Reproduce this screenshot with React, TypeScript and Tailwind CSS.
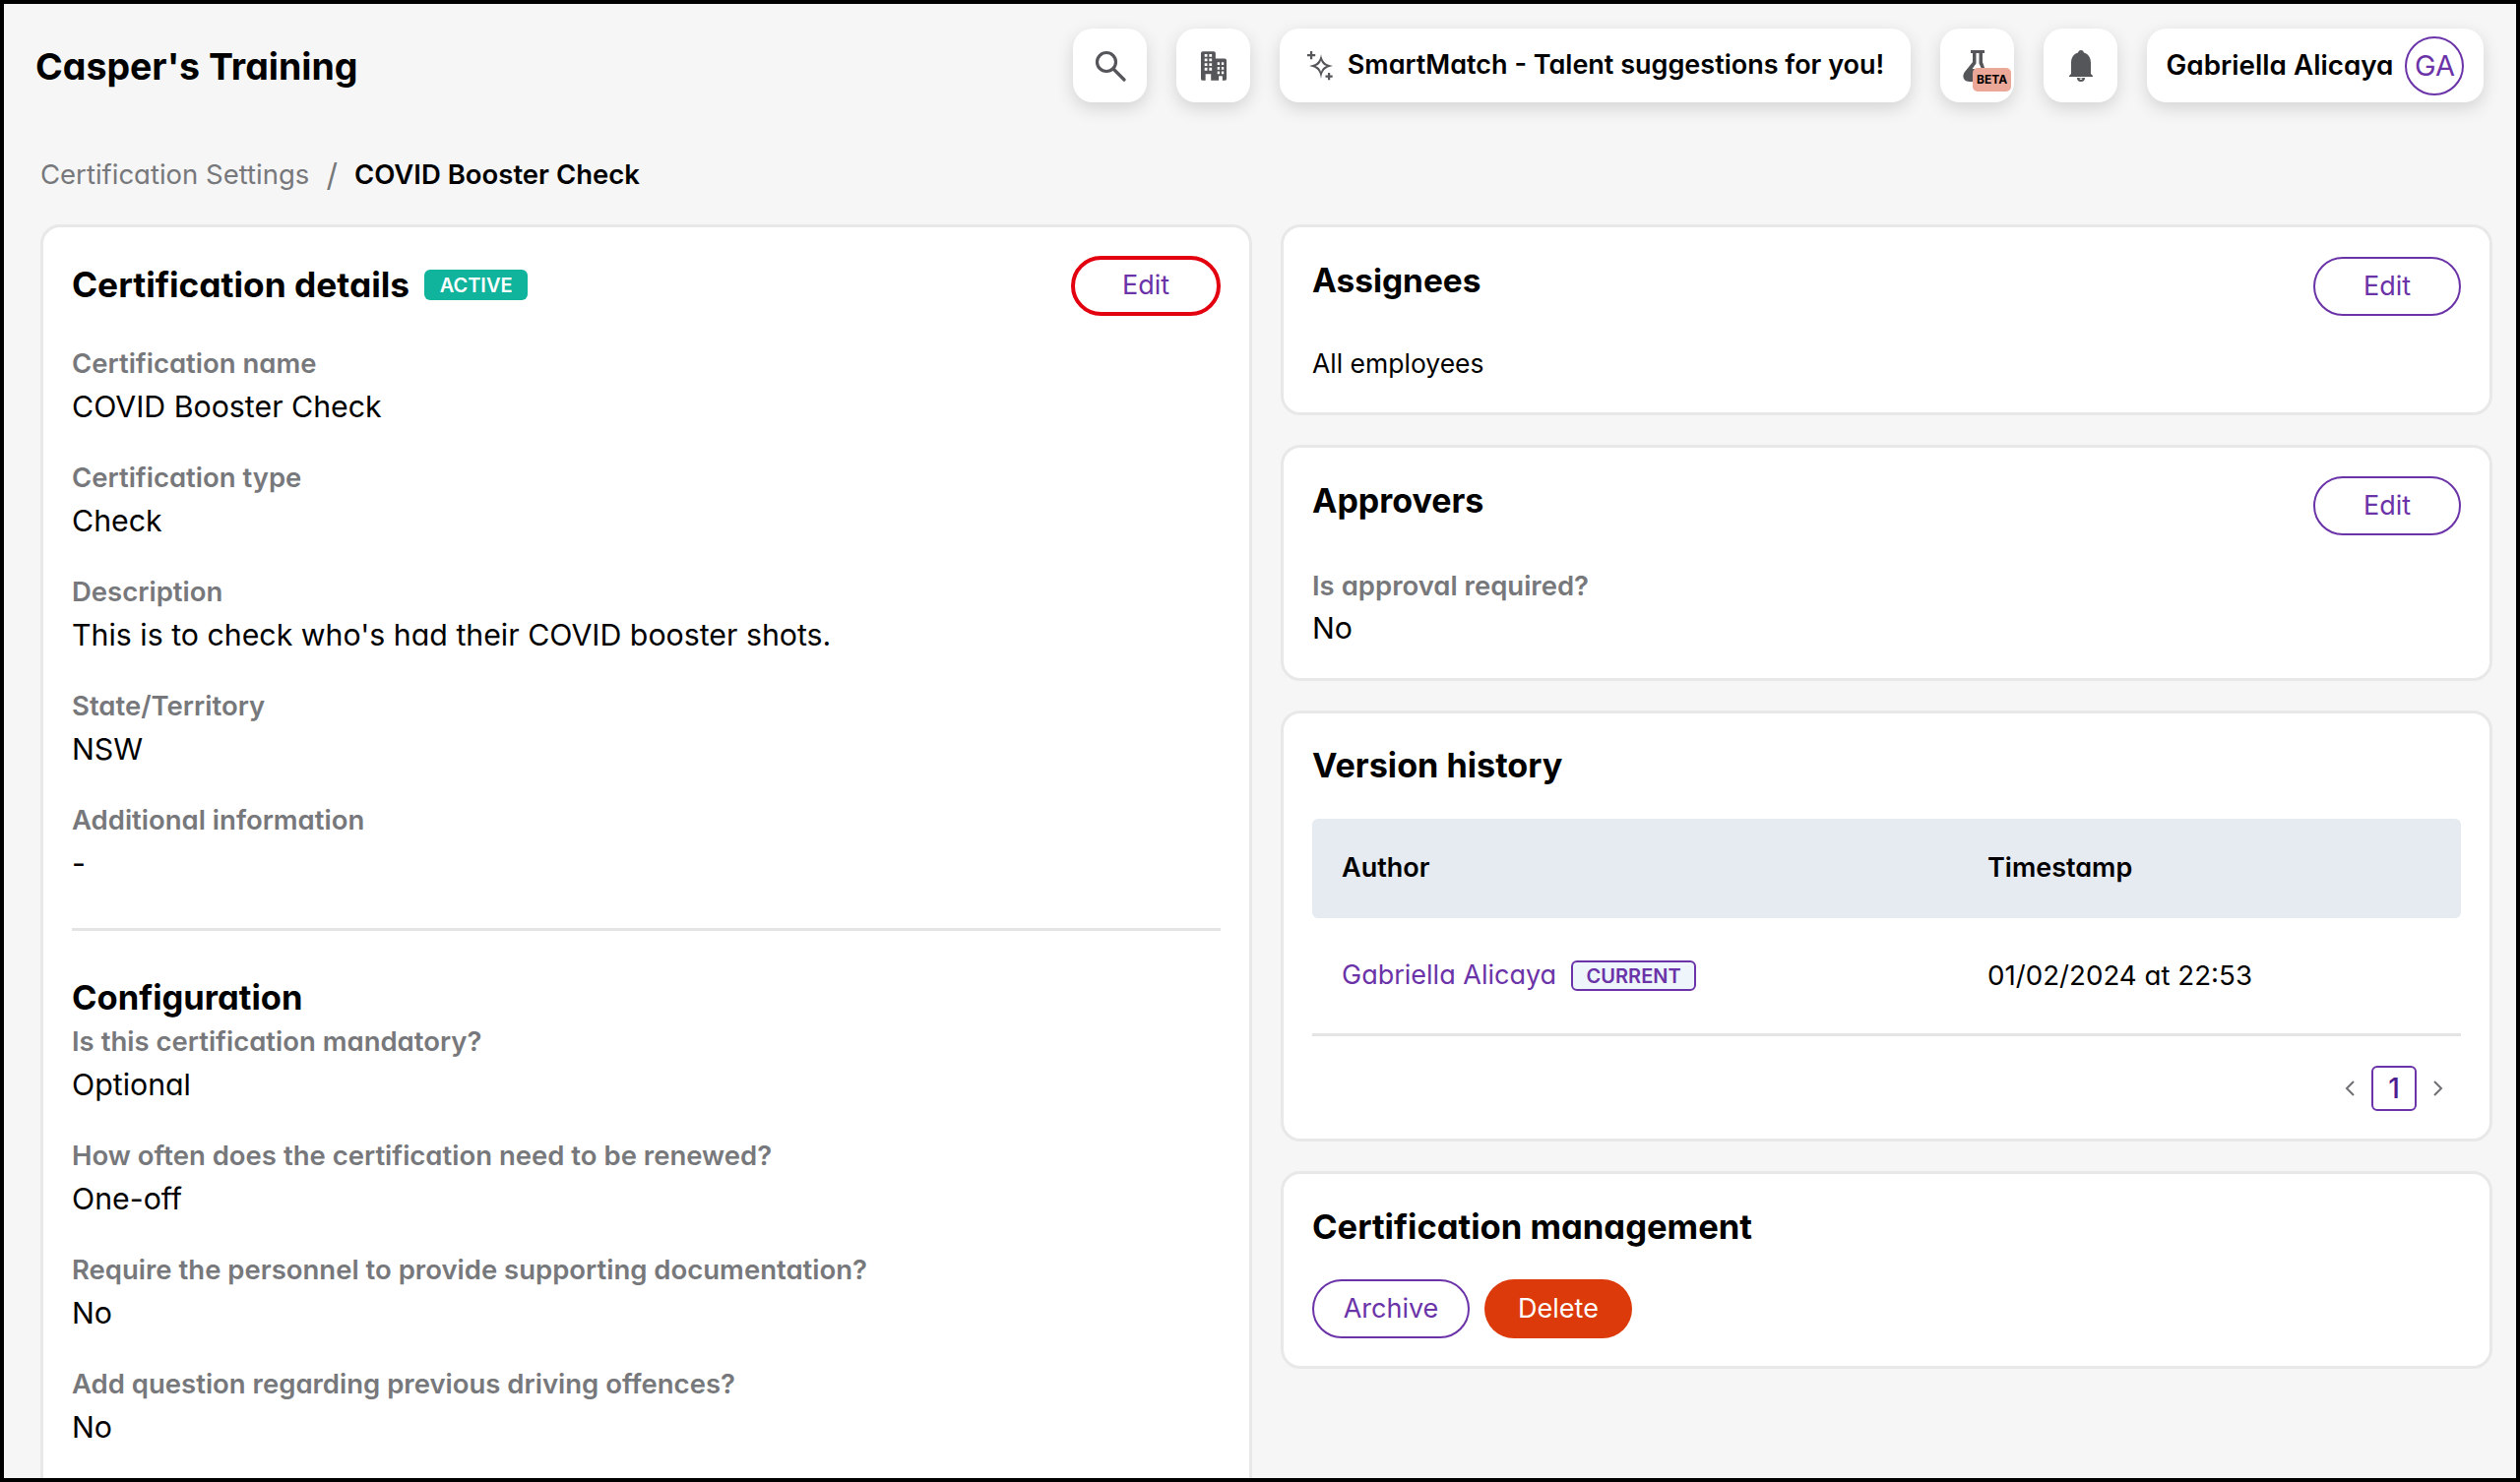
import React from 'react';

const Field = ({ label, value, className = '' }: { label: string; value: string; className?: string }) => (
  <div className={`flex flex-col ${className}`}>
    <div className="h-[44px] text-[27.5px] leading-[44px] font-semibold text-[#77787b]">{label}</div>
    <div className="h-[44px] text-[30.3px] leading-[44px] text-black">{value}</div>
  </div>
);

const Card = ({ className = '', children }: { className?: string; children: React.ReactNode }) => (
  <div className={`rounded-[20px] border-[3px] border-[#e8e8e8] bg-white ${className}`}>{children}</div>
);

const OutlineButton = ({ label, className = '' }: { label: string; className?: string }) => (
  <button className={`flex h-[60px] items-center justify-center rounded-full border-[2px] border-[#6b33a8] bg-white text-[27px] text-[#6b33a8] ${className}`}>
    {label}
  </button>
);

const IconTile = ({ className = '', children }: { className?: string; children: React.ReactNode }) => (
  <div className={`flex h-[75px] items-center justify-center rounded-[20px] bg-white shadow-[0_6px_18px_rgba(0,0,0,0.14)] ${className}`}>
    {children}
  </div>
);

const SearchIcon = () => (
  <svg width="32" height="32" viewBox="0 0 32 32" fill="none" stroke="#55565a" strokeWidth="3.2" strokeLinecap="round">
    <circle cx="12" cy="12" r="9.500" />
    <path d="M19 19 L30 30" />
  </svg>
);

const BuildingIcon = () => (
  <svg width="26" height="30" viewBox="0 0 28 32">
    <path fillRule="evenodd" fill="#55565a" d="M2 0 H14 a2 2 0 0 1 2 2 V8 H26 a2 2 0 0 1 2 2 V30 a2 2 0 0 1 -2 2 H2 a2 2 0 0 1 -2 -2 V2 a2 2 0 0 1 2 -2 Z
      M4 3 v3 h3 v-3 Z M9 3 v3 h3 v-3 Z M4 8 v3 h3 v-3 Z M9 8 v3 h3 v-3 Z M4 13 v3 h3 v-3 Z M9 13 v3 h3 v-3 Z M4 18 v3 h3 v-3 Z M9 18 v3 h3 v-3 Z
      M5 25 v7 h6 v-7 Z M18 12 v3 h2.500 v-3 Z M22.500 12 v3 h2.500 v-3 Z M18 17 v3 h2.500 v-3 Z M22.500 17 v3 h2.500 v-3 Z M18 22 v3 h2.500 v-3 Z M22.500 22 v3 h2.500 v-3 Z M19.500 27 v5 h4 v-5 Z" />
  </svg>
);

const SparkleIcon = () => (
  <svg width="28" height="30" viewBox="0 0 28 30" fill="#55565a">
    <path fillRule="evenodd" d="M15 3 C16 10 19 13.500 27 15 C19 16.500 16 20 15 28 C14 20 11 16.500 3 15 C11 13.500 14 10 15 3 Z M15 9.500 C14 12.500 12.500 14 9.500 15 C12.500 16.300 14 17.800 15 21 C16 17.800 17.500 16.300 20.500 15 C17.500 14 16 12.500 15 9.500 Z" />
    <path d="M4 0 h2.200 v3 h3 v2.200 h-3 v3 h-2.200 v-3 h-3 v-2.200 h3 Z" />
    <path d="M22 22 h2.200 v2.500 h2.500 v2.200 h-2.500 v2.500 h-2.200 v-2.500 h-2.500 v-2.200 h2.500 Z" />
  </svg>
);

const FlaskIcon = () => (
  <svg width="28" height="32" viewBox="0 0 28 32" fill="#55565a" className="-ml-[2px]">
    <path fillRule="evenodd" d="M8 0 H22 V3 H20 V12 L27 32 H7 C0 32 -1 26 2 22 L10 12 V3 H8 Z M13.500 3 V13.500 L9.500 19 H19 L16.500 13.500 V3 Z" />
  </svg>
);

const BellIcon = () => (
  <svg width="24" height="32" viewBox="0 0 24 32" fill="#55565a">
    <path d="M12 0 C13.500 0 14.500 .8 15 2.500 C20 4 22 8 22 13 V24 L24 26 V27 H0 V26 L2 24 V13 C2 8 4 4 9 2.500 C9.500 .8 10.500 0 12 0 Z" />
    <path fillRule="evenodd" d="M8 28 h8 a4 4 0 0 1 -8 0 Z M10.500 28.500 a1.500 1.500 0 0 0 3 0 Z" />
  </svg>
);

const App: React.FC = () => {
  return (
    <div className="h-[1506px] w-[2560px] overflow-hidden border-[4px] border-black bg-[#f6f6f6] font-['Inter',sans-serif] text-black [font-feature-settings:'cv11']">
      {/* top bar */}
      <header className="flex items-start justify-between pt-[25px] pr-[33px] pl-[32px]">
        <h1 className="h-[77px] text-[37.5px] leading-[77px] font-[650]">Casper's Training</h1>
        <div className="flex items-center gap-[30px]">
          <IconTile className="w-[75px]"><SearchIcon /></IconTile>
          <IconTile className="w-[75px]"><BuildingIcon /></IconTile>
          <IconTile className="w-[641px] gap-[14px]">
            <SparkleIcon />
            <span className="text-[27px] font-semibold">SmartMatch - Talent suggestions for you!</span>
          </IconTile>
          <IconTile className="relative w-[75px]">
            <FlaskIcon />
            <span className="absolute top-[40px] left-[33px] rounded-[5px] bg-[#eba898] px-[4px] text-[12px] leading-[24px] font-bold">BETA</span>
          </IconTile>
          <IconTile className="w-[75px]"><BellIcon /></IconTile>
          <IconTile className="w-[342px] gap-[12px]">
            <span className="text-[27.8px] font-semibold">Gabriella Alicaya</span>
            <span className="flex h-[60px] w-[60px] items-center justify-center rounded-full border-[2px] border-[#6b33a8] text-[29px] text-[#6b33a8]">GA</span>
          </IconTile>
        </div>
      </header>

      <nav className="mt-[50px] flex h-[44px] items-center pl-[37px] text-[27.500px]">
        <span className="text-[#77787b]">Certification Settings</span>
        <span className="mx-[17px] text-[32px] text-[#77787b]">/</span>
        <span className="font-semibold">COVID Booster Check</span>
      </nav>

      <main className="mt-[28px] flex items-start gap-[29px] pl-[37px]">
        {/* left column, runs past the bottom of the window */}
        <Card className="h-[1300px] w-[1231px] px-[29px] pt-[27px]">
          <div className="flex items-center justify-between">
            <div className="flex items-center gap-[15px]">
              <h2 className="text-[35.3px] leading-[60px] font-[650]">Certification details</h2>
              <span className="flex h-[31px] w-[105px] items-center justify-center rounded-[6px] bg-[#10b39b] text-[20px] font-semibold text-white">ACTIVE</span>
            </div>
            <button className="mt-[2px] flex h-[61px] w-[152px] items-center justify-center rounded-full border-[4px] border-[#e3000f] text-[27px] text-[#6b33a8]">Edit</button>
          </div>
          <div className="mt-[26px] flex flex-col gap-[28px]">
            <Field label="Certification name" value="COVID Booster Check" />
            <Field label="Certification type" value="Check" />
            <Field label="Description" value="This is to check who's had their COVID booster shots." />
            <Field label="State/Territory" value="NSW" />
            <Field label="Additional information" value="-" />
          </div>
          <div className="mt-[44px] h-[3px] bg-[#e4e4e4]" />
          <h3 className="mt-[46px] text-[34.5px] leading-[44px] font-[650]">Configuration</h3>
          <div className="flex flex-col gap-[28px]">
            <Field label="Is this certification mandatory?" value="Optional" />
            <Field label="How often does the certification need to be renewed?" value="One-off" />
            <Field label="Require the personnel to provide supporting documentation?" value="No" />
            <Field label="Add question regarding previous driving offences?" value="No" />
          </div>
        </Card>

        {/* right column */}
        <div className="flex w-[1231px] flex-col gap-[30px]">
          <Card className="h-[194px] px-[29px] pt-[28px]">
            <div className="flex items-start justify-between">
              <h2 className="text-[33.4px] leading-[52px] font-[650]">Assignees</h2>
              <OutlineButton label="Edit" className="mt-[2px] w-[150px]" />
            </div>
            <p className="mt-[26px] text-[26.5px] leading-[44px]">All employees</p>
          </Card>

          <Card className="h-[240px] px-[29px] pt-[28px]">
            <div className="flex items-start justify-between">
              <h2 className="text-[34px] leading-[52px] font-[650]">Approvers</h2>
              <OutlineButton label="Edit" className="mt-[1px] w-[150px]" />
            </div>
            <div className="mt-[30px] flex flex-col">
              <div className="h-[42px] text-[27.5px] leading-[42px] font-semibold text-[#77787b]">Is approval required?</div>
              <div className="h-[44px] text-[30.3px] leading-[44px]">No</div>
            </div>
          </Card>

          <Card className="h-[438px] px-[29px] pt-[27px]">
            <h2 className="text-[34.2px] leading-[52px] font-[650]">Version history</h2>
            <div className="mt-[28px] flex h-[101px] items-center rounded-[6px] bg-[#e6eaf1] pl-[30px] text-[27px] font-semibold">
              <span className="w-[656px]">Author</span>
              <span>Timestamp</span>
            </div>
            <div className="flex h-[120px] items-center border-b-[3px] border-[#e4e4e4] pl-[30px] text-[27px]">
              <div className="flex w-[656px] items-center gap-[15px]">
                <span className="text-[#6b33a8]">Gabriella Alicaya</span>
                <span className="flex h-[31px] w-[127px] items-center justify-center rounded-[6px] border-[2px] border-[#6b33a8] bg-[#eef6fb] text-[20px] font-semibold text-[#6b33a8]">CURRENT</span>
              </div>
              <span className="text-[27.700px]">01/02/2024 at 22:53</span>
            </div>
            <div className="mt-[30px] flex items-center justify-end gap-[14px] pr-[15px] text-[#6f7073]">
              <svg width="16" height="22" viewBox="0 0 16 22" fill="none" stroke="currentColor" strokeWidth="2">
                <path d="M12 4 L5 11 L12 18" />
              </svg>
              <span className="flex h-[46px] w-[46px] items-center justify-center rounded-[6px] border-[2px] border-[#6b33a8] text-[28px] font-medium text-[#4d1e8f]">1</span>
              <svg width="16" height="22" viewBox="0 0 16 22" fill="none" stroke="currentColor" strokeWidth="2">
                <path d="M4 4 L11 11 L4 18" />
              </svg>
            </div>
          </Card>

          <Card className="h-[201px] px-[29px] pt-[27px]">
            <h2 className="text-[34.6px] leading-[52px] font-[650]">Certification management</h2>
            <div className="mt-[28px] flex gap-[15px]">
              <OutlineButton label="Archive" className="w-[160px]" />
              <button className="flex h-[60px] w-[150px] items-center justify-center rounded-full bg-[#dc3a0a] text-[27px] text-white">Delete</button>
            </div>
          </Card>
        </div>
      </main>
    </div>
  );
};

export default App;
